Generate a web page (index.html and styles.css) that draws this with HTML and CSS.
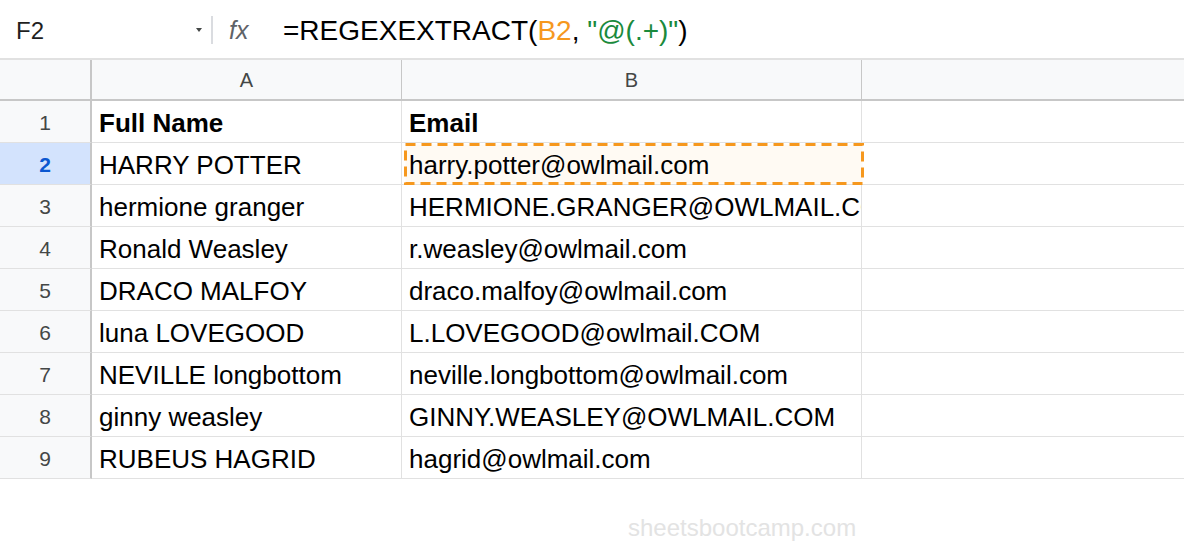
FILE: index.html
```html
<!DOCTYPE html>
<html>
<head>
<meta charset="utf-8">
<link rel="stylesheet" href="styles.css">
</head>
<body>
<div class="app">
  <div class="formula-bar">
    <div class="namebox"><span class="ref">F2</span><span class="caret"></span></div>
    <div class="sep"></div>
    <div class="fx">fx</div>
    <div class="formula">=REGEXEXTRACT(<span class="f-ref">B2</span>, <span class="f-str">"@(.+)"</span>)</div>
  </div>
  <div class="grid">
    <div class="corner hdr"></div>
    <div class="colhdr hdr">A</div>
    <div class="colhdr hdr">B</div>
    <div class="colhdr hdr last"></div>

    <div class="rowhdr">1</div>
    <div class="cell bold">Full Name</div>
    <div class="cell bold">Email</div>
    <div class="cell last"></div>

    <div class="rowhdr active">2</div>
    <div class="cell">HARRY POTTER</div>
    <div class="cell selected"><svg class="ants" width="460" height="42" viewBox="0 0 460 42"><rect x="1.5" y="1.5" width="457" height="39" fill="#fffaf3" stroke="#f6981e" stroke-width="3" stroke-dasharray="10 6"/></svg><span class="txt">harry.potter@owlmail.com</span></div>
    <div class="cell last"></div>

    <div class="rowhdr">3</div>
    <div class="cell">hermione granger</div>
    <div class="cell">HERMIONE.GRANGER@OWLMAIL.COM</div>
    <div class="cell last"></div>

    <div class="rowhdr">4</div>
    <div class="cell">Ronald Weasley</div>
    <div class="cell">r.weasley@owlmail.com</div>
    <div class="cell last"></div>

    <div class="rowhdr">5</div>
    <div class="cell">DRACO MALFOY</div>
    <div class="cell">draco.malfoy@owlmail.com</div>
    <div class="cell last"></div>

    <div class="rowhdr">6</div>
    <div class="cell">luna LOVEGOOD</div>
    <div class="cell">L.LOVEGOOD@owlmail.COM</div>
    <div class="cell last"></div>

    <div class="rowhdr">7</div>
    <div class="cell">NEVILLE longbottom</div>
    <div class="cell">neville.longbottom@owlmail.com</div>
    <div class="cell last"></div>

    <div class="rowhdr">8</div>
    <div class="cell">ginny weasley</div>
    <div class="cell">GINNY.WEASLEY@OWLMAIL.COM</div>
    <div class="cell last"></div>

    <div class="rowhdr">9</div>
    <div class="cell">RUBEUS HAGRID</div>
    <div class="cell">hagrid@owlmail.com</div>
    <div class="cell last"></div>
  </div>
  <div class="footer">
    <span class="watermark">sheetsbootcamp.com</span>
  </div>
</div>
</body>
</html>
```

FILE: styles.css
```css
html, body {
  margin: 0;
  padding: 0;
  background: #ffffff;
}
body {
  font-family: "Liberation Sans", Arial, sans-serif;
  color: #000;
}
.app {
  width: 1184px;
  height: 546px;
  overflow: hidden;
}
.formula-bar {
  height: 58px;
  box-sizing: border-box;
  padding-top: 4px;
  display: flex;
  align-items: center;
  white-space: nowrap;
}
.namebox {
  width: 186px;
  padding-left: 16px;
  display: flex;
  align-items: center;
  justify-content: space-between;
}
.ref {
  font-size: 24px;
  color: #1f1f1f;
}
.caret {
  width: 0;
  height: 0;
  border-left: 3px solid transparent;
  border-right: 3px solid transparent;
  border-top: 4px solid #444746;
  margin-top: -2px;
}
.sep {
  width: 2px;
  height: 28px;
  background: #dadce0;
  margin-left: 9px;
  margin-top: -2px;
}
.fx {
  margin-left: 16px;
  font-size: 25px;
  font-style: italic;
  color: #5f6368;
  width: 24px;
  margin-top: -2px;
}
.formula {
  margin-left: 30px;
  font-size: 28px;
  color: #000;
}
.f-ref { color: #f6981e; }
.f-str { color: #1a8a3c; }

.grid {
  display: grid;
  grid-template-columns: 92px 310px 460px 1fr;
  grid-auto-rows: 42px;
  grid-template-rows: 41px;
  border-top: 2px solid #e1e1e1;
}
.hdr {
  background: #f8f9fa;
  border-bottom: 2px solid #c7c7c7;
  border-right: 1px solid #c7c7c7;
  display: flex;
  align-items: center;
  justify-content: center;
  font-size: 20px;
  color: #444746;
  padding-top: 1px;
}
.corner {
  border-right: 2px solid #c7c7c7;
}
.colhdr.last { border-right: none; }
.rowhdr {
  background: #f8f9fa;
  border-right: 2px solid #c7c7c7;
  border-bottom: 1px solid #e1e1e1;
  display: flex;
  align-items: center;
  justify-content: center;
  font-size: 21px;
  color: #444746;
  padding-top: 2px;
}
.rowhdr.active {
  background: #d3e3fd;
  color: #0b57d0;
  font-weight: bold;
}
.cell {
  border-right: 1px solid #e1e1e1;
  border-bottom: 1px solid #e1e1e1;
  display: flex;
  align-items: center;
  padding-left: 7px;
  padding-top: 4px;
  font-size: 26px;
  white-space: nowrap;
  overflow: hidden;
}
.cell.last {
  border-right: none;
}
.bold { font-weight: bold; }
.selected {
  position: relative;
  overflow: visible;
}
.ants {
  position: absolute;
  left: 2px;
  top: 0;
}
.txt {
  position: relative;
}
.footer {
  height: 67px;
  display: flex;
  align-items: flex-end;
  justify-content: flex-start;
  padding-left: 628px;
}
.watermark {
  font-size: 24px;
  color: #e3e3e3;
  padding-bottom: 4px;
}
```
